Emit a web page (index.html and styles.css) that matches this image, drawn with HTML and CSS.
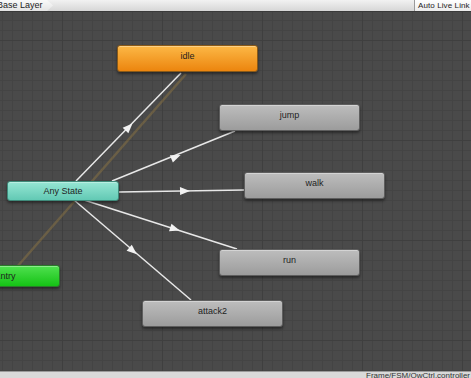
FILE: index.html
```html
<!DOCTYPE html>
<html lang="en">
<head>
  <meta charset="UTF-8">
  <title>Animator</title>
  <link rel="stylesheet" href="styles.css">
</head>
<body>
<div class="window">
  <div class="toolbar">
    <div class="crumb">Base Layer</div>
    <div class="live-link">Auto Live Link</div>
  </div>

  <div class="graph">
    <!-- transitions -->
    <svg class="links" width="471" height="359" viewBox="0 12 471 359">
      <line x1="16" y1="268" x2="186" y2="74" stroke="#a8873e" stroke-opacity="0.35" stroke-width="2.5"/>
      <line x1="76" y1="181" x2="181" y2="73" stroke="#e8e8e8" stroke-width="1.5"/>
      <line x1="112" y1="181" x2="235" y2="131" stroke="#e8e8e8" stroke-width="1.5"/>
      <line x1="119" y1="192" x2="244" y2="190" stroke="#e8e8e8" stroke-width="1.5"/>
      <line x1="84" y1="200" x2="237" y2="249" stroke="#e8e8e8" stroke-width="1.5"/>
      <line x1="74" y1="200" x2="191" y2="300" stroke="#e8e8e8" stroke-width="1.5"/>
      <polygon points="-5,-4 5,0 -5,4" fill="#f2f2f2" transform="translate(129 127) rotate(-45.8)"/>
      <polygon points="-5,-4 5,0 -5,4" fill="#f2f2f2" transform="translate(176 157) rotate(-22.1)"/>
      <polygon points="-5,-4 5,0 -5,4" fill="#f2f2f2" transform="translate(185 191) rotate(-0.9)"/>
      <polygon points="-5,-4 5,0 -5,4" fill="#f2f2f2" transform="translate(175 229) rotate(17.8)"/>
      <polygon points="-5,-4 5,0 -5,4" fill="#f2f2f2" transform="translate(133 251) rotate(40.5)"/>
    </svg>

    <div class="state orange" style="left:117px; top:33px; width:141px;">idle</div>
    <div class="state" style="left:219px; top:92px; width:141px;">jump</div>
    <div class="state teal" style="left:7px; top:169px; width:112px;">Any State</div>
    <div class="state" style="left:244px; top:160px; width:141px;">walk</div>
    <div class="state green" style="left:-50px; top:253px; width:110px;">Entry</div>
    <div class="state" style="left:219px; top:237px; width:141px;">run</div>
    <div class="state" style="left:142px; top:288px; width:141px;">attack2</div>
  </div>

  <div class="statusbar">
    <span>Frame/FSM/OwCtrl.controller</span>
  </div>
</div>
</body>
</html>
```

FILE: styles.css
```css
* {
  box-sizing: border-box;
}

body {
  margin: 0;
  width: 471px;
  height: 378px;
  overflow: hidden;
  font-family: 'Liberation Sans', Arial, sans-serif;
  background: #474747;
}

.window {
  display: flex;
  flex-direction: column;
  height: 378px;
}

.toolbar {
  height: 12px;
  display: flex;
  justify-content: space-between;
  align-items: stretch;
  background: linear-gradient(#f2f2f2, #d6d6d6);
  border-bottom: 1px solid #3a3a3a;
  font-size: 9px;
  color: #1c1c1c;
}

.crumb {
  padding: 0 10px 0 0;
  margin-left: -3px;
  line-height: 11px;
  background: linear-gradient(#fafafa, #e4e4e4);
  clip-path: polygon(0 0, calc(100% - 6px) 0, 100% 50%, calc(100% - 6px) 100%, 0 100%);
  width: 56px;
}

.live-link {
  padding: 0 0 0 3px;
  line-height: 11px;
  font-size: 8px;
  letter-spacing: 0.1px;
  white-space: nowrap;
  background: linear-gradient(#ffffff, #ececec);
  border-left: 1px solid #9a9a9a;
  width: 57px;
}

.graph {
  position: relative;
  flex: 1;
  overflow: hidden;
  background-color: #4a4a4a;
  background-image:
    linear-gradient(#3f3f3f 1px, transparent 1px),
    linear-gradient(90deg, #3f3f3f 1px, transparent 1px),
    linear-gradient(#444 1px, transparent 1px),
    linear-gradient(90deg, #444 1px, transparent 1px);
  background-size: 100px 100px, 100px 100px, 10px 10px, 10px 10px;
  background-position: 62px 28px, 62px 28px, 2px 8px, 2px 8px;
}

.links {
  position: absolute;
  left: 0;
  top: 0;
}

.state {
  position: absolute;
  height: 27px;
  padding-top: 5px;
  text-align: center;
  font-size: 9px;
  color: #1e1e1e;
  border-radius: 3px;
  border: 1px solid #5e5e5e;
  background: linear-gradient(#bdbdbd, #9c9c9c);
  box-shadow: 0 2px 3px rgba(0, 0, 0, 0.45), inset 0 1px 0 rgba(255, 255, 255, 0.35);
}

.state.orange {
  background: linear-gradient(#fcb846, #ec850e);
  border-color: #8a5a18;
}

.state.teal {
  height: 20px;
  padding-top: 4px;
  background: linear-gradient(#96e6d4, #62c9b4);
  border-color: #3f8a7a;
}

.state.green {
  height: 22px;
  padding-top: 5px;
  background: linear-gradient(#4fe04f, #15c215);
  border-color: #2a7a2a;
}

.statusbar {
  height: 7px;
  background: #d9d9d9;
  border-top: 1px solid #9a9a9a;
  font-size: 8px;
  line-height: 8px;
  color: #333;
  padding-left: 366px;
  white-space: nowrap;
  overflow: hidden;
}
```
